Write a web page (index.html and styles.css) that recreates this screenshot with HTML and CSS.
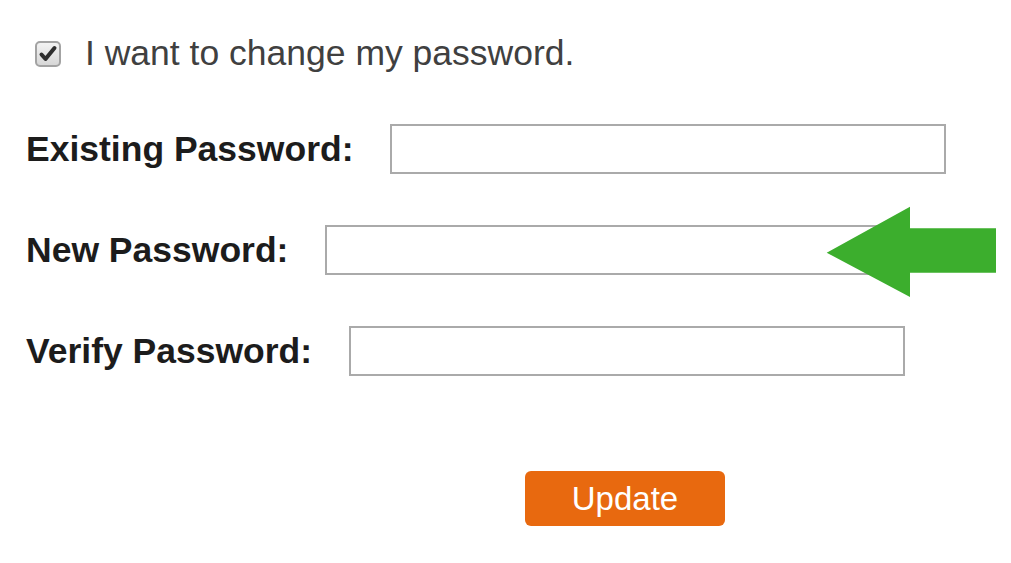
FILE: index.html
```html
<!DOCTYPE html>
<html>
<head>
<meta charset="utf-8">
<title>Change password</title>
<link rel="stylesheet" href="styles.css">
</head>
<body>
<form class="form">
  <label class="check-row">
    <svg class="check-box" width="26" height="26" viewBox="0 0 26 26">
      <defs>
        <linearGradient id="cbg" x1="0" y1="0" x2="0" y2="1">
          <stop offset="0" stop-color="#f4f4f4"/>
          <stop offset="1" stop-color="#d6d6d6"/>
        </linearGradient>
      </defs>
      <rect x="1" y="1" width="24" height="24" rx="4" fill="url(#cbg)" stroke="#a3a3a3" stroke-width="2"/>
      <path d="M6.5 13.5 L10.5 18 L19.5 7" fill="none" stroke="#2e2e2e" stroke-width="4" stroke-linecap="round" stroke-linejoin="round"/>
    </svg>
    <span class="check-text">I want to change my password.</span>
  </label>

  <div class="field-row">
    <label class="field-label" for="existing">Existing Password:</label>
    <input class="field-input" id="existing" type="password">
  </div>

  <div class="field-row">
    <label class="field-label" for="newpw">New Password:</label>
    <input class="field-input" id="newpw" type="password">
  </div>

  <div class="field-row">
    <label class="field-label" for="verify">Verify Password:</label>
    <input class="field-input" id="verify" type="password">
  </div>

  <div class="actions">
    <button class="update-btn" type="button">Update</button>
  </div>
</form>

<svg class="annotation-arrow" width="172" height="92" viewBox="0 0 172 92">
  <polygon points="0.7,46.7 84,0.7 84,22.3 170,22.3 170,66.7 84,66.7 84,91" fill="#3cae2d"/>
</svg>
</body>
</html>
```

FILE: styles.css
```css
html, body {
  margin: 0;
  padding: 0;
  background: #ffffff;
}

body {
  font-family: "Liberation Sans", Arial, sans-serif;
  width: 1011px;
  height: 563px;
  overflow: hidden;
  position: relative;
}

.form {
  display: flex;
  flex-direction: column;
  padding: 33px 0 0 26px;
}

.check-row {
  display: flex;
  align-items: center;
  gap: 24px;
  padding-left: 9px;
  height: 41px;
}

.check-box {
  display: block;
  flex: none;
}

.check-text {
  font-size: 35.5px;
  line-height: 41px;
  color: #404040;
}

.field-row {
  display: flex;
  align-items: center;
  gap: 36.5px;
  margin-top: 51px;
}

.check-row + .field-row {
  margin-top: 50px;
}

.field-label {
  font-size: 35.5px;
  font-weight: bold;
  line-height: 41px;
  color: #1c1c1c;
}

.field-input {
  box-sizing: border-box;
  width: 556px;
  height: 50px;
  margin: 0;
  border: 2px solid #aaaaaa;
  border-radius: 0;
  background: #ffffff;
  padding: 0 8px;
  font-size: 30px;
  outline: none;
}

.actions {
  display: flex;
  padding-left: 499px;
  margin-top: 95px;
}

.update-btn {
  width: 200px;
  height: 55px;
  border: none;
  border-radius: 6px;
  background: #e8690f;
  color: #ffffff;
  font-family: "Liberation Sans", Arial, sans-serif;
  font-size: 33px;
  padding: 0;
  cursor: pointer;
}

.annotation-arrow {
  position: absolute;
  left: 826px;
  top: 206px;
  display: block;
}
```
